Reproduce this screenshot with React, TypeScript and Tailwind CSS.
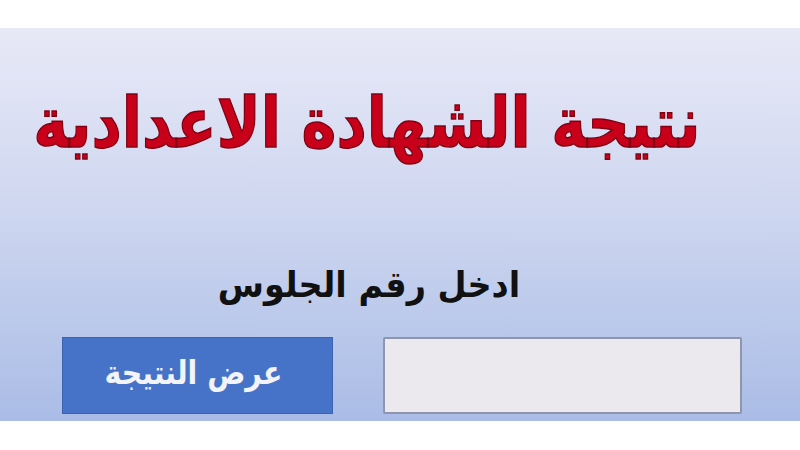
export default function App() {
  return (
    <div className="w-[800px] h-[450px] bg-white flex flex-col pt-[28px] pb-[29px]" dir="rtl">
      <div
        className="flex-1 flex flex-col bg-gradient-to-b from-[#e8e9f7] via-[#ccd5ef] to-[#aabce6]"
        style={{ fontFamily: '"DejaVu Sans", "Noto Sans", sans-serif' }}
      >
        {/* heading */}
        <div className="h-[130px] shrink-0 flex items-end pr-[100px]">
          <h1
            className="inline-block whitespace-nowrap text-[70px] leading-none font-bold text-[#c8001a] origin-right scale-x-[0.845]"
            style={{ WebkitTextStroke: "1.5px #800012" }}
          >
            نتيجة الشهادة الاعدادية
          </h1>
        </div>
        {/* seat number label */}
        <div className="h-[145px] shrink-0 flex items-end pr-[280px]">
          <p className="inline-block whitespace-nowrap text-[36px] leading-none font-bold text-[#111111] origin-right scale-x-[0.93]">
            ادخل رقم الجلوس
          </p>
        </div>
        {/* input + submit */}
        <div className="flex items-start gap-[50px] pr-[58px] pt-[34px]">
          <div className="w-[359px] h-[77px] shrink-0 bg-[#ebe9ed] border-2 border-[#8e95ae] rounded-[2px]" />
          <div className="w-[271px] h-[77px] shrink-0 bg-[#4673c8] border border-[#3b63b1] flex items-center justify-center pb-[6px] pr-[8px]">
            <span className="inline-block whitespace-nowrap text-[33px] font-bold text-[#f2f4fa] leading-none scale-x-[0.86]">
              عرض النتيجة
            </span>
          </div>
        </div>
      </div>
    </div>
  );
}
